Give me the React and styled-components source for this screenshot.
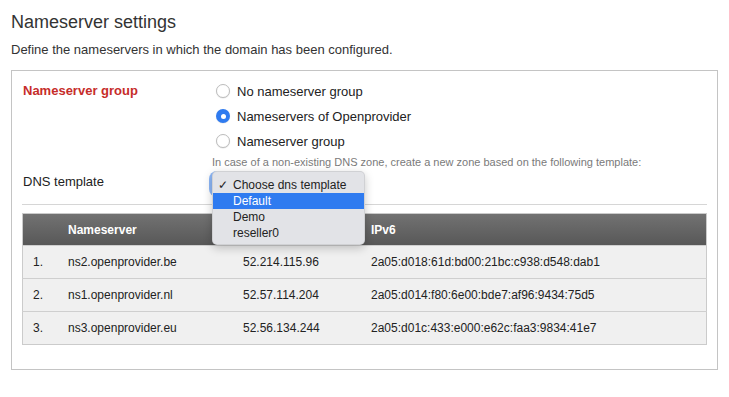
import React from 'react';
import styled, { createGlobalStyle } from 'styled-components';

const GlobalStyle = createGlobalStyle`
  body {
    margin: 0;
    background: #fff;
    font-family: "Liberation Sans", Arial, Helvetica, sans-serif;
    color: #333;
  }
`;

const Page = styled.div`
  padding: 12px 11px 0 11px;
`;

const Title = styled.h1`
  margin: 0;
  font-size: 18px;
  line-height: 21px;
  font-weight: normal;
  color: #333;
`;

const Intro = styled.p`
  margin: 9px 0 12px;
  font-size: 13px;
  line-height: 16px;
  color: #333;
`;

const Panel = styled.div`
  border: 1px solid #c4c4c4;
  padding: 10px 10px 25px;
  height: 300px;
  box-sizing: border-box;
`;

const Form = styled.div`
  display: grid;
  grid-template-columns: 190px 1fr;
  padding-bottom: 10px;
  border-bottom: 1px solid #d6d6d6;
`;

const Label = styled.div`
  padding-left: 1px;
  font-size: 13px;
  line-height: 20px;
  color: ${p => (p.$required ? '#c62d2a' : '#222')};
  font-weight: ${p => (p.$required ? 'bold' : 'normal')};
  align-self: ${p => (p.$center ? 'center' : 'start')};
`;

const RadioList = styled.div`
  display: flex;
  flex-direction: column;
  gap: 5px;
`;

const Option = styled.label`
  display: flex;
  align-items: center;
  gap: 7px;
  height: 20px;
  padding-left: 4px;
  font-size: 13px;
  color: #222;
`;

const RadioDot = styled.span`
  width: 14px;
  height: 14px;
  border-radius: 50%;
  box-sizing: border-box;
  border: ${p => (p.$on ? 'none' : '1px solid #bdbdbd')};
  background: ${p => (p.$on ? '#2f7bf0' : '#fff')};
  box-shadow: 0 0.5px 1px rgba(0, 0, 0, 0.12);
  display: flex;
  align-items: center;
  justify-content: center;
  &::after {
    content: '';
    width: 5px;
    height: 5px;
    border-radius: 50%;
    background: #fff;
    display: ${p => (p.$on ? 'block' : 'none')};
  }
`;

const Hint = styled.div`
  grid-column: 2;
  margin-top: 4px;
  font-size: 11px;
  line-height: 14px;
  color: #7a7a7a;
`;

const SelectWrap = styled.div`
  position: relative;
  margin-top: 5px;
  width: 150px;
  height: 20px;
`;

const SelectBox = styled.div`
  height: 20px;
  border-radius: 5px;
  background: #fff;
  box-shadow: 0 0 0 3px rgba(47, 123, 240, 0.55);
`;

const Menu = styled.ul`
  position: absolute;
  left: 0;
  top: -3px;
  width: 153px;
  margin: 0;
  padding: 5px 0 3px;
  list-style: none;
  background: #e2e3e7;
  border: 1px solid rgba(0, 0, 0, 0.08);
  border-radius: 5px;
  box-shadow: 0 3px 10px rgba(0, 0, 0, 0.22);
  box-sizing: border-box;
  z-index: 5;
`;

const MenuItem = styled.li`
  position: relative;
  height: 16px;
  line-height: 16px;
  padding-left: 20px;
  font-size: 12px;
  color: ${p => (p.$active ? '#fff' : '#222')};
  background: ${p => (p.$active ? '#2f7bf0' : 'transparent')};
`;

const Check = styled.span`
  position: absolute;
  left: 5px;
  top: 0;
`;

const Table = styled.table`
  margin-top: 8px;
  width: 100%;
  border-collapse: collapse;
  table-layout: fixed;
  font-size: 12px;
  border: 1px solid #cbcbcb;
`;

const HeadRow = styled.tr`
  background: linear-gradient(#727272, #575757);
  height: 32px;
`;

const Th = styled.th`
  width: ${p => p.$w || 'auto'};
  padding: 0 0 0 10px;
  text-align: left;
  color: #fff;
  font-weight: bold;
`;

const Row = styled.tr`
  background: #f0f0f0;
  height: 33px;
  border-top: 1px solid #cfcfcf;
`;

const Td = styled.td`
  padding: 0 0 0 10px;
  color: #222;
  white-space: nowrap;
`;

const servers = [
  ['ns2.openprovider.be', '52.214.115.96', '2a05:d018:61d:bd00:21bc:c938:d548:dab1'],
  ['ns1.openprovider.nl', '52.57.114.204', '2a05:d014:f80:6e00:bde7:af96:9434:75d5'],
  ['ns3.openprovider.eu', '52.56.134.244', '2a05:d01c:433:e000:e62c:faa3:9834:41e7'],
];

const options = ['No nameserver group', 'Nameservers of Openprovider', 'Nameserver group'];
const templates = ['Choose dns template', 'Default', 'Demo', 'reseller0'];

export default function App() {
  return (
    <Page>
      <GlobalStyle />
      <Title>Nameserver settings</Title>
      <Intro>Define the nameservers in which the domain has been configured.</Intro>
      <Panel>
        <Form>
          <Label $required>Nameserver group</Label>
          <RadioList>
            {options.map((o, i) => (
              <Option key={o}>
                <RadioDot $on={i === 1} />
                {o}
              </Option>
            ))}
          </RadioList>
          <Hint>In case of a non-existing DNS zone, create a new zone based on the following template:</Hint>
          <Label $center>DNS template</Label>
          <SelectWrap>
            <SelectBox />
            <Menu>
              {templates.map((t, i) => (
                <MenuItem key={t} $active={i === 1}>
                  {i === 0 && <Check>✓</Check>}
                  {t}
                </MenuItem>
              ))}
            </Menu>
          </SelectWrap>
        </Form>
        <Table>
          <thead>
            <HeadRow>
              <Th $w="25px"></Th>
              <Th $w="165px">Nameserver</Th>
              <Th $w="118px">IPv4</Th>
              <Th>IPv6</Th>
            </HeadRow>
          </thead>
          <tbody>
            {servers.map((s, i) => (
              <Row key={s[0]}>
                <Td>{i + 1}.</Td>
                <Td>{s[0]}</Td>
                <Td>{s[1]}</Td>
                <Td>{s[2]}</Td>
              </Row>
            ))}
          </tbody>
        </Table>
      </Panel>
    </Page>
  );
}
